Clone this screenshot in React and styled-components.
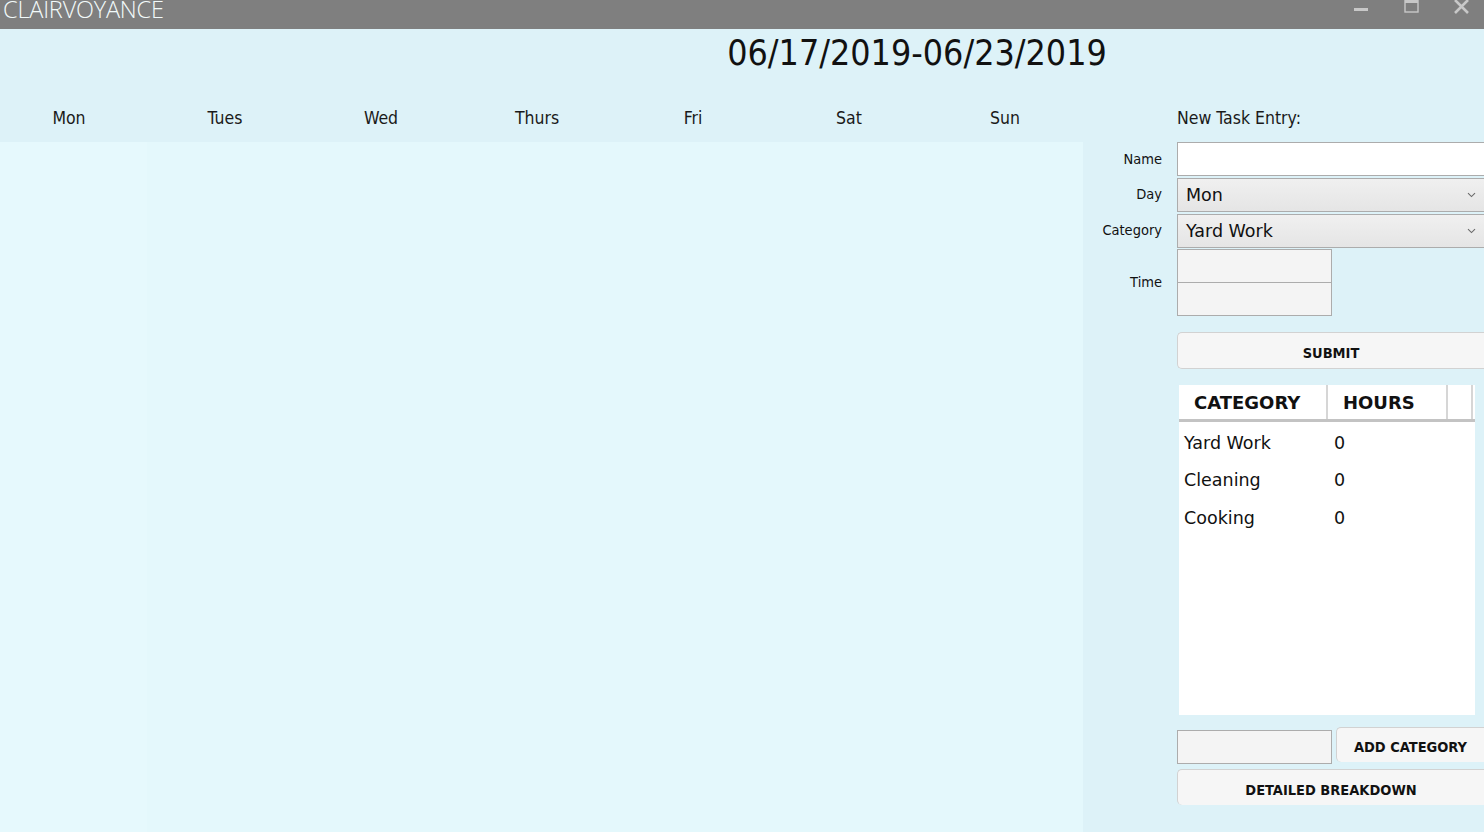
import React from 'react';
import styled, { createGlobalStyle } from 'styled-components';

const days = ['Mon', 'Tues', 'Wed', 'Thurs', 'Fri', 'Sat', 'Sun'];
const categories = [
    { name: 'Yard Work', hours: 0 },
    { name: 'Cleaning', hours: 0 },
    { name: 'Cooking', hours: 0 },
];

const Chevron = () => (
    <svg width="9" height="6" viewBox="0 0 9 6">
        <path d="M1 1.2 L4.5 4.6 L8 1.2" fill="none" stroke="#6a6a6a" strokeWidth="1.1" />
    </svg>
);

const App = () => {
    return (
        <Window>
            <GlobalStyle />
            <TitleBar>
                <AppName>CLAIRVOYANCE</AppName>
                <Controls>
                    <svg width="16" height="14" viewBox="0 0 16 14">
                        <rect x="1" y="8" width="14" height="3" fill="#c8c8c8" />
                    </svg>
                    <svg width="16" height="14" viewBox="0 0 16 14">
                        <rect x="2" y="0" width="13" height="12" fill="none" stroke="#c8c8c8" strokeWidth="1.4" />
                        <rect x="2" y="0" width="13" height="3" fill="#c8c8c8" />
                    </svg>
                    <svg width="18" height="14" viewBox="0 0 18 14">
                        <path d="M2 0 L15 13 M15 0 L2 13" stroke="#c8c8c8" strokeWidth="2.6" />
                    </svg>
                </Controls>
            </TitleBar>
            <Main>
                <DateRow>06/17/2019-06/23/2019</DateRow>
                <Week>
                    <DayHeader>
                        {days.map((day) => (
                            <DayLabel key={day}>{day}</DayLabel>
                        ))}
                    </DayHeader>
                    <DayBody>
                        {days.map((day, index) => (
                            <DayColumn key={day} shade={index === 0} />
                        ))}
                    </DayBody>
                </Week>
                <Side>
                    <PanelTitle>New Task Entry:</PanelTitle>
                    <Form>
                        <Label>Name</Label>
                        <TextBox />
                        <Label>Day</Label>
                        <Combo>
                            <span>Mon</span>
                            <Chevron />
                        </Combo>
                        <Label>Category</Label>
                        <Combo>
                            <span>Yard Work</span>
                            <Chevron />
                        </Combo>
                        <Label>Time</Label>
                        <TimeStack>
                            <SmallBox />
                            <SmallBox />
                        </TimeStack>
                        <span />
                        <WideButton>SUBMIT</WideButton>
                        <span />
                        <Table>
                            <TableHead>
                                <HeadCell width={149}>CATEGORY</HeadCell>
                                <HeadCell width={120}>HOURS</HeadCell>
                                <HeadCell width={25} />
                            </TableHead>
                            {categories.map((c) => (
                                <TableRow key={c.name}>
                                    <Cell width={150}>{c.name}</Cell>
                                    <Cell>{c.hours}</Cell>
                                </TableRow>
                            ))}
                        </Table>
                        <span />
                        <AddRow>
                            <SmallBox />
                            <AddButton>ADD CATEGORY</AddButton>
                        </AddRow>
                        <span />
                        <WideButton tall>DETAILED BREAKDOWN</WideButton>
                    </Form>
                </Side>
            </Main>
        </Window>
    );
};

const GlobalStyle = createGlobalStyle`
  html, body {
    margin: 0;
    padding: 0;
    background: #ddf2f8;
    font-family: "DejaVu Sans", sans-serif;
  }
`;

const narrow = `
  font-family: "DejaVu Sans Condensed", "DejaVu Sans", sans-serif;
  font-stretch: semi-condensed;
`;

const Window = styled.div`
  width: 1484px;
  height: 832px;
  overflow: hidden;
  display: flex;
  flex-direction: column;
  background: #ddf2f8;
`;

const TitleBar = styled.div`
  height: 29px;
  flex: none;
  background: #7f7f7f;
  display: flex;
  justify-content: space-between;
  overflow: hidden;
`;

const AppName = styled.div`
  font-family: "Open Sans", sans-serif;
  font-weight: 300;
  font-size: 23.5px;
  line-height: 19px;
  letter-spacing: -0.2px;
  color: #f2fafa;
  padding-left: 3px;
`;

const Controls = styled.div`
  display: flex;
  gap: 34px;
  padding-right: 13px;
  align-items: flex-start;
  svg { display: block; }
`;

const Main = styled.div`
  flex: 1;
  display: grid;
  grid-template-columns: 1083px 1fr;
  grid-template-rows: 72px 1fr;
`;

const DateRow = styled.div`
  grid-column: 1 / 3;
  ${narrow}
  font-size: 35.5px;
  color: #111;
  padding: 4px 0 0 350px;
  text-align: center;
  line-height: 40px;
`;

const Week = styled.div`
  display: flex;
  flex-direction: column;
  overflow: hidden;
`;

const DayHeader = styled.div`
  display: grid;
  grid-template-columns: repeat(7, 156px);
  margin-left: -9px;
  height: 41px;
  align-items: center;
`;

const DayLabel = styled.div`
  ${narrow}
  font-size: 17.5px;
  color: #1a1a1a;
  text-align: center;
  padding-bottom: 7px;
`;

const DayBody = styled.div`
  flex: 1;
  display: grid;
  grid-template-columns: repeat(7, 156px);
  margin-left: -9px;
`;

const DayColumn = styled.div`
  background: ${(p) => (p.shade ? '#e6f9fd' : '#e4f8fc')};
`;

const Side = styled.div`
  display: flex;
  flex-direction: column;
`;

const PanelTitle = styled.div`
  ${narrow}
  font-size: 17.5px;
  color: #1a1a1a;
  padding-left: 94px;
  height: 41px;
  line-height: 34px;
`;

const Form = styled.div`
  display: grid;
  grid-template-columns: 79px 307px;
  column-gap: 15px;
  align-items: center;
`;

const Label = styled.div`
  ${narrow}
  font-size: 14.5px;
  color: #111;
  text-align: right;
`;

const TextBox = styled.div`
  height: 32px;
  background: #fff;
  border: 1px solid #acacac;
  border-right: none;
`;

const Combo = styled.div`
  height: 34px;
  box-sizing: border-box;
  background: linear-gradient(#f0f0f0, #e5e5e5);
  border: 1px solid #acacac;
  border-right: none;
  display: flex;
  align-items: center;
  justify-content: space-between;
  padding: 0 8px 0 8px;
  font-size: 17.5px;
  color: #111;
  margin-top: 2px;
`;

const TimeStack = styled.div`
  display: flex;
  flex-direction: column;
  margin-top: 1px;
`;

const SmallBox = styled.div`
  width: 153px;
  height: 32px;
  background: #f4f4f4;
  border: 1px solid #acacac;
  & + & { border-top: none; }
`;

const WideButton = styled.div`
  ${narrow}
  font-weight: bold;
  font-size: 14.5px;
  color: #111;
  height: ${(p) => (p.tall ? '36px' : '37px')};
  margin-top: ${(p) => (p.tall ? '5px' : '16px')};
  box-sizing: border-box;
  background: #f6f6f6;
  border: 1px solid #d2d2d2;
  border-right: none;
  border-bottom: ${(p) => (p.tall ? 'none' : '1px solid #d2d2d2')};
  border-radius: 5px 0 0 5px;
  display: flex;
  align-items: center;
  justify-content: center;
  padding: 4px 0 0 0;
`;

const Table = styled.div`
  margin: 16px 0 0 2px;
  width: 296px;
  height: 330px;
  background: #fff;
`;

const TableHead = styled.div`
  display: flex;
  height: 34px;
  border-bottom: 3px solid #c3c3c3;
`;

const HeadCell = styled.div`
  width: ${(p) => p.width}px;
  box-sizing: border-box;
  border-right: 2px solid #d6d6d6;
  font-weight: bold;
  font-size: 18px;
  color: #111;
  padding-left: 15px;
  line-height: 36px;
`;

const TableRow = styled.div`
  display: flex;
  height: 37.5px;
  align-items: center;
  font-size: 17.5px;
  color: #111;
`;

const Cell = styled.div`
  width: ${(p) => (p.width ? `${p.width}px` : 'auto')};
  padding-left: 5px;
  padding-top: 4px;
  box-sizing: border-box;
`;

const AddRow = styled.div`
  display: flex;
  align-items: flex-start;
  gap: 4px;
  margin-top: 12px;
  & > div:first-child { margin-top: 3px; }
`;

const AddButton = styled.div`
  ${narrow}
  font-weight: bold;
  font-size: 14.5px;
  color: #111;
  flex: 1;
  height: 35px;
  box-sizing: border-box;
  background: #f6f6f6;
  border: 1px solid #d2d2d2;
  border-bottom: none;
  border-right: none;
  border-radius: 5px 0 0 5px;
  display: flex;
  align-items: center;
  justify-content: center;
  padding-top: 4px;
`;

export default App;
